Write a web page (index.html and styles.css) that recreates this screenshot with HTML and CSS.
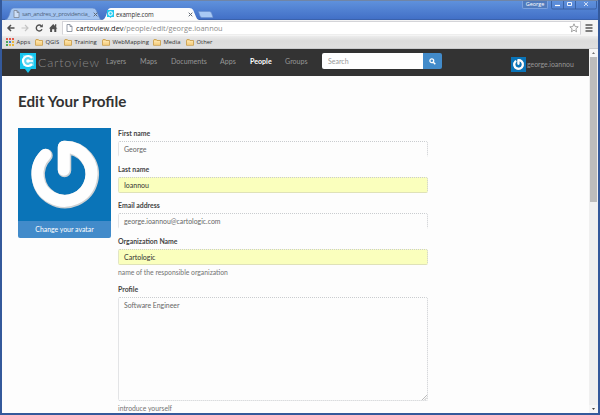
FILE: index.html
```html
<!DOCTYPE html>
<html lang="en">
<head>
<meta charset="utf-8">
<title>example.com</title>
<link rel="stylesheet" href="styles.css">
</head>
<body>
<svg class="defs" width="0" height="0">
  <symbol id="page" viewBox="0 0 7 8"><path d="M1 .5h3l2 2v5H1zM4 .5v2h2" fill="#fff" fill-opacity=".45" stroke="#7d8794" stroke-width=".8"/></symbol>
  <symbol id="folder" viewBox="0 0 8 7"><path d="M.5 6.3V1.2l.5-.7h2.3l.7 1h3.5v4.8z" fill="#f9d58a" stroke="#c69a45" stroke-width=".8"/><path d="M1 2.8h6" stroke="#fff0c5" stroke-width=".7"/></symbol>
  <symbol id="power" viewBox="0 0 93 93">
    <path d="M0 0h93v93H0z" fill="#0a74b8"/>
    <g fill="none" stroke-linecap="round" stroke-linejoin="round">
      <path d="M28 27.500A27 27 0 1 0 46.500 19.500V42.500" stroke="#cfd2d4" stroke-width="13.500"/>
      <path d="M27.300 26.800A27 27 0 1 0 45.800 18.800V41.800" stroke="#fefefe" stroke-width="12"/>
    </g>
  </symbol>
</svg>
<div class="window">
  <header class="titlebar">
    <div class="tabs">
      <div class="tab tab-idle"><svg class="tab-shape" viewBox="0 0 100 12" preserveAspectRatio="none"><path d="M0 12Q3 11 4 8L6 2Q7 0 9 0H90Q93 0 94 2L97 9Q98 12 100 12z" fill="#a4c5f1" stroke="#6287c4" stroke-width=".7"/></svg><svg class="tab-icon" width="7" height="8"><use href="#page"/></svg><span class="tab-text idle-text">san_andres_y_providencia_</span><svg class="close" viewBox="0 0 5 5"><path d="M.7.700l3.600 3.600M4.300.7L.7 4.300"/></svg></div>
      <div class="tab tab-live"><svg class="tab-shape" viewBox="0 0 100 12" preserveAspectRatio="none"><path d="M0 12Q3 11 4 8L6 2Q7 0 9 0H90Q93 0 94 2L97 9Q98 12 100 12z" fill="#fcfcfc"/></svg><svg class="tab-icon" width="7" height="8" viewBox="0 0 7 8"><path d="M0 0h7v7H4.500L3.500 8l-1-1H0z" fill="#20c8ee"/><circle cx="3.500" cy="3.500" r="1.800" fill="none" stroke="#fff" stroke-width="1.100"/></svg><span class="tab-text">example.com</span><svg class="close" viewBox="0 0 5 5"><path d="M.7.700l3.600 3.600M4.300.7L.7 4.300"/></svg></div>
      <svg class="new-tab" viewBox="0 0 16 7"><path d="M.5.500h11q1.500 0 2 1.500l1.500 4.500H4q-1.500 0-2-1.500z" fill="#a9c9f4" stroke="#6b90cd" stroke-width=".6"/></svg>
    </div>
    <div class="controls">
      <span class="profile-name">George</span>
      <svg class="window-buttons" width="46" height="9" viewBox="0 0 46 9"><path d="M.5 0v6.500q0 1.500 1.500 1.500h42q1.500 0 1.500-1.500V0M12.500 0v8M24.500 0v8" fill="none" stroke="#385f9f" stroke-width=".9"/><path d="M4 4.500h5" stroke="#fff" stroke-width="1.200"/><path d="M16.500 1.500h4v3h-4z" fill="none" stroke="#eef4ff"/><path d="M33 1.200l4 3.800m0-3.800L33 5" stroke="#d5e2f8" stroke-width="1"/></svg>
    </div>
  </header>
  <div class="toolbar">
    <svg class="nav-icons" width="60" height="16" viewBox="0 0 60 16" fill="none">
      <path d="M12.500 8H6M9 5L6 8l3 3" stroke="#505050" stroke-width="1.500"/>
      <path d="M19.500 8H26M23 5l3 3-3 3" stroke="#c4c4c4" stroke-width="1.200"/>
      <path d="M39.300 5.700A3 3 0 1 0 40 9.300" stroke="#505050" stroke-width="1.400"/><path d="M40.800 4v3.300h-3.300z" fill="#505050"/>
      <path d="M47 8.500L51.200 4l4.200 4.500h-1.100V12h-2V9.200h-2.200V12h-2V8.500zM53 4.200h1.300v2.500H53z" fill="#505050"/>
    </svg>
    <div class="address"><svg width="7" height="8"><use href="#page"/></svg><span class="url">cartoview.dev<span class="path">/people/edit/george.ioannou</span></span>
      <svg class="star" width="10" height="10" viewBox="0 0 10 10"><path d="M5 .8l1.200 2.800 3 .2-2.300 2 .7 3L5 7.200 2.400 8.800l.7-3-2.300-2 3-.2z" fill="#fff" stroke="#8d8d8d" stroke-width=".8"/></svg>
    </div>
    <svg class="menu" width="8" height="8" viewBox="0 0 8 8"><path d="M.5 1h7M.5 4h7M.5 7h7" stroke="#555" stroke-width="1.600"/></svg>
  </div>
  <nav class="bookmarks">
    <span class="mark m-apps"><svg width="8" height="8" viewBox="0 0 8 8"><path d="M0 0h2v2H0zM3 0h2v2H3zM6 0h2v2H6z" fill="#e2594c"/><path d="M0 3h2v2H0z" fill="#49a55b"/><path d="M3 3h2v2H3z" fill="#477fd0"/><path d="M6 3h2v2H6zM3 6h2v2H3zM6 6h2v2H6z" fill="#e8b53c"/><path d="M0 6h2v2H0z" fill="#49a55b"/></svg>Apps</span>
    <span class="mark m-qgis"><svg width="8" height="7"><use href="#folder"/></svg>QGIS</span>
    <span class="mark m-training"><svg width="8" height="7"><use href="#folder"/></svg>Training</span>
    <span class="mark m-web"><svg width="8" height="7"><use href="#folder"/></svg>WebMapping</span>
    <span class="mark m-media"><svg width="8" height="7"><use href="#folder"/></svg>Media</span>
    <span class="mark"><svg width="8" height="7"><use href="#folder"/></svg>Other</span>
  </nav>
  <div class="viewport">
    <div class="page">
      <div class="navbar">
        <svg class="logo" width="16" height="20" viewBox="0 0 16 20"><path d="M0 0h16v16h-5l-3 4-3-4H0z" fill="#16c5ee"/><path d="M3 2h9l2 2v9H3z" fill="#fff" fill-opacity=".3"/><path d="M12 5A5 5 0 1 0 12 11" fill="none" stroke="#fff" stroke-width="2.200"/><path d="M8 8h5" stroke="#fff" stroke-width="1.600"/><circle cx="8" cy="8" r="1.800" fill="#fff"/></svg>
        <span class="brand">Cartoview</span>
        <div class="links"><a class="l1">Layers</a><a class="l2">Maps</a><a class="l3">Documents</a><a class="l4">Apps</a><a class="l5 active">People</a><a class="l6">Groups</a></div>
        <div class="search"><span class="query">Search</span><span class="go"><svg width="7" height="7" viewBox="0 0 7 7"><circle cx="2.800" cy="2.800" r="1.900" fill="none" stroke="#fff" stroke-width="1.300"/><path d="M4.300 4.300l2 2" stroke="#fff" stroke-width="1.500"/></svg></span></div>
        <div class="user"><svg width="15" height="15" viewBox="0 0 93 93"><use href="#power"/></svg><span>george.ioannou</span></div>
      </div>
      <h1>Edit Your Profile</h1>
      <main class="content">
        <aside class="avatar"><svg width="93" height="93"><use href="#power"/></svg><div class="change">Change your avatar</div></aside>
        <form class="form">
          <div class="field"><label>First name</label><div class="input">George</div></div>
          <div class="field"><label>Last name</label><div class="input filled">Ioannou</div></div>
          <div class="field"><label>Email address</label><div class="input email">george.ioannou@cartologic.com</div></div>
          <div class="field tall"><label>Organization Name</label><div class="input filled">Cartologic</div><p>name of the responsible organization</p></div>
          <div class="field"><label>Profile</label><div class="input area">Software Engineer<svg class="grip" width="5" height="5" viewBox="0 0 5 5"><path d="M0 5l5-5M2.500 5L5 2.500" stroke="#aaa" stroke-width=".8"/></svg></div><p class="intro">introduce yourself</p></div>
        </form>
      </main>
    </div>
    <div class="scrollbar"><svg class="arrow" width="9" height="8" viewBox="0 0 9 8"><path d="M3 5l1.500-2L6 5z" fill="#777"/></svg><div class="thumb"></div><svg class="arrow down" width="9" height="8" viewBox="0 0 9 8"><path d="M3 3l1.500 2L6 3z" fill="#444"/></svg></div>
  </div>
</div>
</body>
</html>
```

FILE: styles.css
```css
* { box-sizing: border-box; }
body { margin: 0; width: 600px; height: 415px; overflow: hidden; font-family: Lato, "Liberation Sans", sans-serif; font-size: 7px; white-space: nowrap; }
svg { display: block; flex: none; }
.defs { position: absolute; }
.window { width: 600px; height: 415px; display: flex; flex-direction: column; border: solid #34599b; border-width: 0 2px 2px; background: #fdfdfd; }
.titlebar { height: 20px; flex: none; display: flex; justify-content: space-between; align-items: flex-start; border-top: 1px solid #7085a6; border-bottom: 1px solid #3b62ac; background: linear-gradient(#5f91dc, #4270c7); }
.tabs { display: flex; align-items: flex-end; height: 19px; padding-left: 3px; }
.tab { position: relative; display: flex; align-items: center; height: 12px; font: 6.2px "Open Sans", sans-serif; color: #333; }
.tab-idle { width: 97px; padding-left: 8px; }
.tab-live { width: 97px; padding-left: 5px; }
.tab-shape { position: absolute; left: 0; top: 0; width: 100%; height: 12px; }
.tab-icon { position: relative; margin-right: 2px; }
.tab-text { position: relative; flex: none; width: 72px; letter-spacing: -.1px; }
.idle-text { width: 71px; color: #50647f; font-size: 5.9px; letter-spacing: -.25px; }
.close { position: relative; width: 5px; height: 5px; fill: none; stroke: #606873; stroke-width: 1; }
.new-tab { width: 16px; height: 7px; margin: 0 0 2px -1px; }
.controls { display: flex; padding-right: 1px; }
.profile-name { width: 26px; height: 8px; border: 1px solid #7ba0dd; border-top: 0; border-radius: 0 0 2px 2px; background: #517bbd; color: #fff; font: 5.5px/7px "Open Sans", sans-serif; text-align: center; margin-right: 3px; }
.toolbar { height: 16px; flex: none; display: flex; align-items: center; background: #f4f4f4; }
.address { flex: 1; height: 14px; display: flex; align-items: center; padding-left: 3px; background: #fff; border: 1px solid #d4d4d8; border-bottom-color: #eee; font: 7.4px/12px "Open Sans", sans-serif; color: #222; }
.url { margin-left: 3px; }
.path { color: #8a8a8a; }
.star { margin-left: auto; margin-right: 1px; }
.menu { margin: 0 5px 0 4px; }
.bookmarks { height: 13px; flex: none; display: flex; align-items: center; padding-left: 4px; border-bottom: 1px solid #c9cacc; background: linear-gradient(#ececec, #dcdcdc 40%, #dfdfdf); color: #333; font: 5.9px "Open Sans", sans-serif; }
.mark { display: flex; align-items: center; gap: 2.5px; }
.m-apps { width: 29px; }
.m-qgis { width: 29px; }
.m-training { width: 38px; }
.m-web { width: 51px; }
.m-media { width: 33px; }
.viewport { flex: 1; display: flex; min-height: 0; }
.page { width: 587px; overflow: hidden; }
.navbar { height: 27px; display: flex; align-items: center; padding-left: 18px; background: #333; color: #969696; }
.logo { margin-top: 1px; }
.brand { width: 70px; padding-left: 2px; font: 300 12.5px/20px Lato, sans-serif; color: #8a8a8a; letter-spacing: .75px; }
.links { display: flex; width: 216px; margin-top: -3px; font-size: 7.1px; }
.l1 { width: 34px; } .l2 { width: 31px; } .l3 { width: 49px; } .l4 { width: 30px; } .l5 { width: 35px; }
.active { color: #fff; font-weight: 700; }
.search { display: flex; width: 120px; height: 16px; margin-top: -3px; }
.query { width: 101px; padding-left: 6px; line-height: 16px; background: #fff; color: #999; border-radius: 2px 0 0 2px; }
.go { flex: 1; display: flex; align-items: center; justify-content: center; background: #428bca; border-radius: 0 2px 2px 0; }
.user { display: flex; align-items: center; gap: 1px; margin: 3px 0 0 69px; font-size: 6.9px; }
h1 { margin: 15px 0 0 16px; font: 700 15.2px/20px Lato, sans-serif; color: #333; }
.content { display: flex; gap: 7px; padding: 17px 0 0 16px; }
.avatar { width: 93px; }
.change { height: 17px; background: #428bca; color: #fff; font: 6.9px/16px Lato, sans-serif; text-align: center; border-radius: 0 0 2px 2px; }
.form { width: 310px; }
.field { height: 36px; }
.tall { height: 48px; }
label { display: block; height: 13px; font: 700 6.9px/11px Lato, sans-serif; color: #444; }
.input { height: 16px; border: 1px dotted #c9cccf; border-bottom-color: transparent; border-radius: 2px; padding-left: 5px; line-height: 14px; color: #666; }
.filled { background: #faffbd; color: #333; border-bottom: 1px solid #dfe2b8; }
.email { font-size: 6.9px; }
.area { position: relative; height: 104px; line-height: 15px; font-size: 6.9px; border-bottom-color: #c9cccf; }
.grip { position: absolute; right: 0; bottom: 0; fill: none; }
p { margin: 2px 0 0; font-size: 6.8px; line-height: 10px; color: #737373; }
.scrollbar { width: 9px; display: flex; flex-direction: column; background: #f0f0f0; }
.arrow { background: #f6f6f6; }
.thumb { width: 7px; height: 145px; margin-left: 1px; background: #bcbcbc; }
.down { margin-top: auto; }
```
